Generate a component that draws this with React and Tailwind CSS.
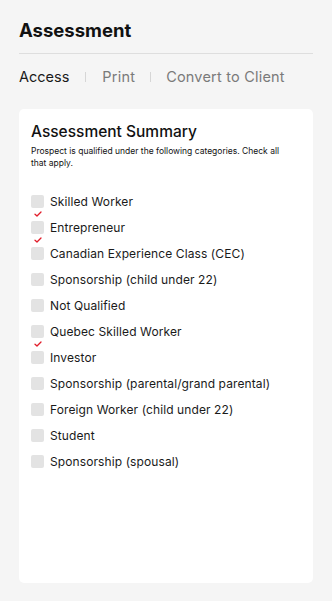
import React from "react";

const categories = [
  { label: "Skilled Worker", checked: true },
  { label: "Entrepreneur", checked: true },
  { label: "Canadian Experience Class (CEC)" },
  { label: "Sponsorship (child under 22)" },
  { label: "Not Qualified" },
  { label: "Quebec Skilled Worker", checked: true },
  { label: "Investor" },
  { label: "Sponsorship (parental/grand parental)" },
  { label: "Foreign Worker (child under 22)" },
  { label: "Student" },
  { label: "Sponsorship (spousal)" },
];

function Check() {
  return (
    <svg
      className="absolute left-[3px] top-[16px]"
      width="8"
      height="6"
      viewBox="0 0 8 6"
      fill="none"
    >
      <path d="M1 3.2 L3 5 L7 1" stroke="#e11d2a" strokeWidth="1.3" strokeLinecap="round" strokeLinejoin="round" />
    </svg>
  );
}

export default function App() {
  return (
    <div
      className="min-h-[600px] bg-[#f5f5f5] px-[19px] pt-[18px] pb-[18px]"
      style={{ fontFamily: "Inter, 'Noto Sans', sans-serif" }}
    >
      {/* Header */}
      <h1 className="text-[18.5px] leading-[24px] font-bold text-[#111]">
        Assessment
      </h1>
      <div className="mt-[11px] h-px bg-[#dedede]" />

      {/* Tabs */}
      <div className="mt-[13px] flex items-center text-[14.5px] leading-[20px] tracking-[0.2px]">
        <span className="text-[#1a1a1a] tracking-normal">Access</span>
        <span className="mx-[16px] h-[10px] w-px bg-[#d6d6d6]" />
        <span className="text-[#7a7a7a]">Print</span>
        <span className="mx-[15px] h-[10px] w-px bg-[#d6d6d6]" />
        <span className="text-[#7a7a7a]">Convert to Client</span>
      </div>

      {/* Card */}
      <div className="mt-[22px] h-[474px] rounded-[5px] bg-white px-[12px] pt-[12px]">
        <h2 className="text-[15.5px] leading-[22px] font-medium text-[#111]">
          Assessment Summary
        </h2>
        <p className="mt-[3px] text-[8.5px] leading-[11.5px] text-[#111] pr-[10px]">
          Prospect is qualified under the following categories. Check all that apply.
        </p>

        <ul className="mt-[26px] flex flex-col gap-[13px]">
          {categories.map((c) => (
            <li key={c.label} className="relative flex items-center h-[13px]">
              <span className="h-[13px] w-[13px] rounded-[2px] bg-[#e3e3e3] shrink-0" />
              <span className="ml-[6px] text-[12px] leading-[13px] tracking-[0.1px] text-[#1a1a1a]">
                {c.label}
              </span>
              {c.checked && <Check />}
            </li>
          ))}
        </ul>
      </div>
    </div>
  );
}
